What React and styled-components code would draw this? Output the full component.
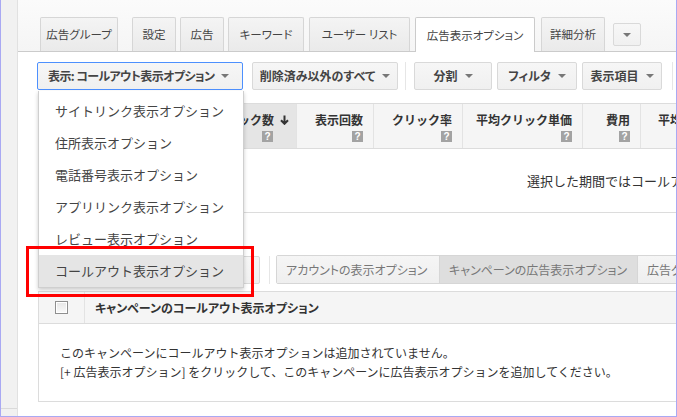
import React from "react";
import styled, { createGlobalStyle } from "styled-components";

const GlobalStyle = createGlobalStyle`
  html, body { margin: 0; padding: 0; background: #fff; }
  body { font-family: "Noto Sans CJK JP", "Noto Sans", sans-serif; color: #333; }
  * { box-sizing: border-box; }
`;

const Frame = styled.div`
  position: relative;
  width: 677px;
  height: 417px;
  border: 1px solid #a9a9f3;
  border-top: none;
  display: flex;
  overflow: hidden;
  background: #fff;
`;

const Side = styled.div`
  width: 17px;
  flex: none;
  background: #f1f1f1;
  border-right: 1px solid #e1e1e1;
  display: flex;
  flex-direction: column;
  justify-content: flex-end;
`;

const SideFoot = styled.div`
  height: 8px;
  border-top: 1px solid #dadada;
`;

const Main = styled.div`
  flex: 1;
  min-width: 0;
  display: flex;
  flex-direction: column;
  overflow: hidden;
`;

const TabBar = styled.div`
  height: 52px;
  flex: none;
  padding: 17px 0 0 22px;
  display: flex;
  align-items: flex-end;
  background: linear-gradient(#fbfbfb, #f5f5f5);
  border-bottom: 1px solid #cbcbcb;
`;

const Tab = styled.div`
  flex: none;
  width: ${(p) => p.$w}px;
  margin-left: ${(p) => p.$gap || 0}px;
  height: ${(p) => (p.$active ? 35 : 34)}px;
  margin-bottom: ${(p) => (p.$active ? -1 : 0)}px;
  border: 1px solid ${(p) => (p.$active ? "#cbcbcb" : "#d6d6d6")};
  border-bottom: none;
  border-radius: 2px 2px 0 0;
  background: ${(p) => (p.$active ? "#fff" : "linear-gradient(#f4f4f4, #eaeaea)")};
  color: #444;
  font-size: 11.5px;
  font-feature-settings: "palt";
  display: flex;
  align-items: center;
  justify-content: center;
  padding-bottom: 1px;
  white-space: nowrap;
`;

const TabMenuBtn = styled.div`
  flex: none;
  width: 28px;
  height: 23px;
  margin: 0 0 5px 8px;
  border: 1px solid #d9d9d9;
  border-radius: 2px;
  background: linear-gradient(#f7f7f7, #f0f0f0);
  display: flex;
  align-items: center;
  justify-content: center;
`;

const Caret = styled.span`
  display: inline-block;
  width: 0;
  height: 0;
  border-left: 4px solid transparent;
  border-right: 4px solid transparent;
  border-top: 4px solid #777;
  margin-left: ${(p) => p.$ml ?? 7}px;
  flex: none;
`;

const Toolbar = styled.div`
  flex: none;
  display: flex;
  align-items: center;
  padding: 10px 0 0 19px;
`;

const Button = styled.div`
  flex: none;
  width: ${(p) => p.$w}px;
  margin-left: ${(p) => p.$gap || 0}px;
  height: 28px;
  border: 1px solid ${(p) => (p.$focus ? "#4d90fe" : "#d9d9d9")};
  border-radius: 2px;
  background: linear-gradient(#f6f6f6, #f0f0f0);
  color: #444;
  font-size: 12px;
  font-weight: bold;
  font-feature-settings: "palt";
  letter-spacing: ${(p) => (p.$tight ? "-0.6px" : "0")};
  display: flex;
  align-items: center;
  justify-content: ${(p) => (p.$left ? "flex-start" : "center")};
  padding: 0 ${(p) => (p.$left ? 10 : 0)}px 1px;
  white-space: nowrap;
`;

const Sep = styled.div`
  flex: none;
  width: 1px;
  height: 28px;
  background: #e6e6e6;
  margin-left: ${(p) => p.$gap}px;
`;

const StatsTable = styled.div`
  margin: 13px 0 0 20px;
  width: 720px;
  flex: none;
`;

const HeadRow = styled.div`
  display: flex;
  height: 46px;
  border-top: 1px solid #dcdcdc;
  border-bottom: 1px solid #dcdcdc;
  background: #f5f5f5;
`;

const HeadCell = styled.div`
  flex: none;
  width: ${(p) => p.$w}px;
  background: ${(p) => (p.$sorted ? "#e5e5e5" : "transparent")};
  border-right: 1px solid #e3e3e3;
  display: flex;
  flex-direction: column;
  align-items: flex-end;
  padding: 7px ${(p) => p.$pr ?? 10}px 0 0;
  font-size: 12px;
  font-weight: bold;
  color: #333;
  white-space: nowrap;
`;

const HeadLabel = styled.div`
  display: flex;
  align-items: center;
  line-height: 18px;
`;

const Help = styled.span`
  width: 11px;
  height: 11px;
  margin-top: 2px;
  margin-right: ${(p) => p.$mr || 0}px;
  background: #a3a3a3;
  color: #fff;
  font-family: "Liberation Sans", Arial, sans-serif;
  font-size: 10px;
  font-weight: bold;
  line-height: 11px;
  text-align: center;
`;

const EmptyRow = styled.div`
  height: 64px;
  border-bottom: 1px solid #dcdcdc;
  display: flex;
  align-items: center;
  padding: 0 0 0 489px;
  font-size: 13px;
  color: #333;
  white-space: nowrap;
`;

const SubToolbar = styled.div`
  flex: none;
  display: flex;
  align-items: center;
  margin: 42px 0 0 20px;
`;

const Segments = styled.div`
  flex: none;
  display: flex;
  margin-left: 6px;
  border: 1px solid #d6d6d6;
  border-radius: 2px;
  height: 29px;
  overflow: hidden;
`;

const Segment = styled.div`
  flex: none;
  width: ${(p) => p.$w}px;
  background: ${(p) => (p.$active ? "#dedede" : "linear-gradient(#f5f5f5, #efefef)")};
  border-right: 1px solid #d6d6d6;
  color: #777;
  font-size: 12px;
  font-feature-settings: "palt";
  display: flex;
  align-items: center;
  padding-left: 9px;
  white-space: nowrap;
`;

const ExtTable = styled.div`
  flex: none;
  margin: 7px 0 0 20px;
  width: 700px;
  border: 1px solid #dcdcdc;
`;

const ExtHead = styled.div`
  display: flex;
  height: 32px;
  background: #f5f5f5;
  border-bottom: 1px solid #dcdcdc;
`;

const CheckCell = styled.div`
  flex: none;
  width: 46px;
  border-right: 1px solid #e3e3e3;
  display: flex;
  align-items: center;
  justify-content: center;
  padding-right: 1px;
`;

const Checkbox = styled.span`
  width: 13px;
  height: 13px;
  border: 1px solid #8f8f8f;
  background: linear-gradient(#e6e6e6, #fafafa);
  box-shadow: inset 0 0 0 1px #fff;
`;

const ExtTitle = styled.div`
  display: flex;
  align-items: center;
  padding-left: 10px;
  font-size: 12px;
  font-weight: bold;
  font-feature-settings: "palt";
  color: #333;
`;

const ExtBody = styled.div`
  height: 77px;
  padding: 19px 0 0 21px;
  font-size: 12px;
  line-height: 19px;
  color: #333;
  white-space: nowrap;
`;

const Menu = styled.div`
  position: absolute;
  left: 37px;
  top: 91px;
  width: 206px;
  background: #fff;
  border: 1px solid #cfcfcf;
  border-top: none;
  box-shadow: 0 2px 4px rgba(0, 0, 0, 0.2);
  padding-top: 4px;
  z-index: 5;
`;

const MenuItem = styled.div`
  height: 32px;
  display: flex;
  align-items: center;
  padding: 0 0 1px 16px;
  font-size: 13px;
  color: #444;
  background: ${(p) => (p.$hl ? "#e5e5e5" : "transparent")};
  white-space: nowrap;
`;

const Highlight = styled.div`
  position: absolute;
  left: 25px;
  top: 246px;
  width: 228px;
  height: 51px;
  border: 3px solid #ff0000;
  z-index: 6;
`;

const SortArrow = () => (
  <svg width="9" height="10" viewBox="0 0 9 10" style={{ marginLeft: 6 }}>
    <path d="M4.5 0.5v8M1 5.2l3.5 3.6 3.5-3.6" stroke="#333" strokeWidth="2" fill="none" />
  </svg>
);

const tabs = [
  { t: "広告グループ", w: 78, gap: 0 },
  { t: "設定", w: 44, gap: 14 },
  { t: "広告", w: 44, gap: 4 },
  { t: "キーワード", w: 76, gap: 4 },
  { t: "ユーザー リスト", w: 101, gap: 5 },
  { t: "広告表示オプション", w: 120, gap: 5, active: true },
  { t: "詳細分析", w: 64, gap: 6 },
];

const cols = [
  { t: "クリック数", w: 74, sorted: true },
  { t: "表示回数", w: 77 },
  { t: "クリック率", w: 89 },
  { t: "平均クリック単価", w: 120 },
  { t: "費用", w: 58 },
  { t: "平均掲載順位", w: 100 },
];

const menuItems = [
  "サイトリンク表示オプション",
  "住所表示オプション",
  "電話番号表示オプション",
  "アプリリンク表示オプション",
  "レビュー表示オプション",
  "コールアウト表示オプション",
];

export default function App() {
  return (
    <>
      <GlobalStyle />
      <Frame>
        <Side>
          <SideFoot />
        </Side>
        <Main>
          <TabBar>
            {tabs.map((tb) => (
              <Tab key={tb.t} $w={tb.w} $gap={tb.gap} $active={tb.active}>
                {tb.t}
              </Tab>
            ))}
            <TabMenuBtn>
              <Caret $ml={0} />
            </TabMenuBtn>
          </TabBar>

          <Toolbar>
            <Button $w={206} $focus $left $tight>
              表示: コールアウト表示オプション
              <Caret />
            </Button>
            <Button $w={146} $gap={9}>
              削除済み以外のすべて
              <Caret />
            </Button>
            <Sep $gap={7} />
            <Button $w={78} $gap={8}>
              分割
              <Caret />
            </Button>
            <Button $w={80} $gap={5}>
              フィルタ
              <Caret />
            </Button>
            <Button $w={80} $gap={5}>
              表示項目
              <Caret />
            </Button>
            <Sep $gap={10} />
          </Toolbar>

          <StatsTable>
            <HeadRow>
              <HeadCell $w={46} />
              <HeadCell $w={139} />
              {cols.map((c) => (
                <HeadCell key={c.t} $w={c.w} $sorted={c.sorted} $pr={c.sorted ? 7 : 10}>
                  <HeadLabel>
                    {c.t}
                    {c.sorted && <SortArrow />}
                  </HeadLabel>
                  <Help $mr={c.sorted ? 16 : 0}>?</Help>
                </HeadCell>
              ))}
            </HeadRow>
            <EmptyRow>選択した期間ではコールアウト表示オプションのデータはありません。</EmptyRow>
          </StatsTable>

          <SubToolbar>
            <Button $w={222} />
            <Sep $gap={9} />
            <Segments>
              <Segment $w={163}>アカウントの表示オプション</Segment>
              <Segment $w={198} $active>
                キャンペーンの広告表示オプション
              </Segment>
              <Segment $w={160}>広告グループの広告表示オプション</Segment>
            </Segments>
          </SubToolbar>

          <ExtTable>
            <ExtHead>
              <CheckCell>
                <Checkbox />
              </CheckCell>
              <ExtTitle>キャンペーンのコールアウト表示オプション</ExtTitle>
            </ExtHead>
            <ExtBody>
              このキャンペーンにコールアウト表示オプションは追加されていません。
              <br />
              [+ 広告表示オプション] をクリックして、このキャンペーンに広告表示オプションを追加してください。
            </ExtBody>
          </ExtTable>
        </Main>

        <Menu>
          {menuItems.map((m, i) => (
            <MenuItem key={m} $hl={i === menuItems.length - 1}>
              {m}
            </MenuItem>
          ))}
        </Menu>
        <Highlight />
      </Frame>
    </>
  );
}
